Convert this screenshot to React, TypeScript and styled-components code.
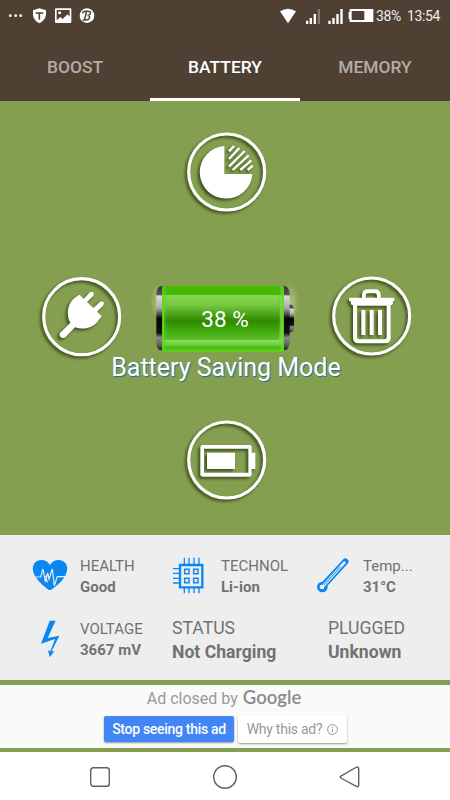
import React from 'react';
import styled, { createGlobalStyle } from 'styled-components';

const GlobalStyle = createGlobalStyle`
  * { box-sizing: border-box; }
  body { margin: 0; font-family: Roboto, "Liberation Sans", sans-serif; }
  svg { display: block; flex: none; }
`;

const Screen = styled.main`
  width: 450px;
  height: 800px;
  display: flex;
  flex-direction: column;
  background: #849f50;
  overflow: hidden;
`;

const Header = styled.header`
  height: 101px;
  background: #4e4033;
  flex: none;
`;

const StatusBar = styled.div`
  height: 32px;
  display: flex;
  justify-content: space-between;
  color: #fff;
`;

const StatusRight = styled.div`
  display: flex;
`;

const StatusText = styled.span<{ $width: number }>`
  width: ${p => p.$width}px;
  font-size: 14px;
  letter-spacing: -0.35px;
  line-height: 33px;
  white-space: nowrap;
  color: #f0eeec;
`;

const Tabs = styled.nav`
  height: 69px;
  display: grid;
  grid-template-columns: repeat(3, 150px);
`;

const Tab = styled.button<{ $active?: boolean }>`
  border: 0;
  border-bottom: 3px solid ${p => (p.$active ? '#fff' : 'transparent')};
  background: none;
  padding: 3px 0 0;
  font: 500 17.4px/20px Roboto, sans-serif;
  color: ${p => (p.$active ? '#fff' : '#b3aca6')};
`;

const Hero = styled.section`
  height: 434px;
  flex: none;
  padding-top: 19px;
  display: flex;
  flex-direction: column;
`;

const CenterRow = styled.div`
  padding-left: 175px;
`;

const MiddleRow = styled.div`
  margin-top: 40px;
  padding-left: 30px;
  display: grid;
  grid-template-columns: 105px 185px 105px;
`;

const IconDrawing = styled.svg`
  width: 105px;
  height: 105px;
  overflow: visible;
  filter: drop-shadow(-1.5px 2px 1.8px rgba(20, 30, 0, 0.65));
`;

const BatteryBox = styled.div`
  display: grid;
  > * { grid-area: 1 / 1; }
`;

const Percent = styled.span`
  padding: 0 5px 0 0;
  text-align: center;
  font-size: 22.5px;
  line-height: 108px;
  height: 105px;
  color: #fff;
  z-index: 1;
`;

const ModeTitle = styled.h1`
  height: 30px;
  margin: -17px 0 25px;
  padding-left: 2px;
  text-align: center;
  font-weight: 400;
  font-size: 25px;
  line-height: 30px;
  color: #fff;
  text-shadow: 1px 1px 1px #16709a;
  z-index: 1;
`;

const Panel = styled.section`
  height: 145px;
  flex: none;
  background: #eee;
  padding-top: 21px;
`;

const InfoRow = styled.div<{ $cols: string }>`
  display: grid;
  grid-template-columns: ${p => p.$cols};
  height: 63px;
`;

const Metric = styled.div<{ $large?: boolean }>`
  color: #727272;
  white-space: nowrap;
  font-size: ${p => (p.$large ? 17.6 : 15)}px;
  line-height: ${p => (p.$large ? 23.5 : 20.5)}px;
  margin-top: ${p => (p.$large ? -2 : 0)}px;
`;

const Label = styled.div``;

const Value = styled.div`
  font-weight: 700;
`;

const AdBar = styled.section`
  height: 63px;
  flex: none;
  margin: 5px 0 4px;
  background: #fafafa;
`;

const AdTitle = styled.div`
  height: 27px;
  display: flex;
  justify-content: center;
  align-items: baseline;
  gap: 5px;
  font-size: 16px;
  line-height: 27px;
  color: #999;
  padding-right: 2px;
`;

const Brand = styled.span`
  font-family: Lato, sans-serif;
  font-weight: 600;
  font-size: 18.5px;
  line-height: 20px;
  color: #8b8b8b;
`;

const AdActions = styled.div`
  display: flex;
  padding-left: 104px;
  gap: 4px;
`;

const AdButton = styled.button<{ $primary?: boolean }>`
  width: ${p => (p.$primary ? 130 : 109)}px;
  height: ${p => (p.$primary ? 26 : 28)}px;
  margin-top: ${p => (p.$primary ? 4 : 3)}px;
  padding: 0;
  border: 0;
  border-radius: 2px;
  display: flex;
  align-items: center;
  justify-content: center;
  gap: 5px;
  white-space: nowrap;
  font: ${p => (p.$primary ? 500 : 400)} 14px/20px Roboto, sans-serif;
  letter-spacing: ${p => (p.$primary ? -0.3 : -0.25)}px;
  color: ${p => (p.$primary ? '#fff' : '#999')};
  background: ${p => (p.$primary ? '#4285f4' : '#fff')};
  box-shadow: 0 1px 2px rgba(0, 0, 0, 0.4);
`;

const NavBar = styled.footer`
  height: 48px;
  flex: none;
  background: #fff;
  display: flex;
  justify-content: center;
  gap: 99px;
  padding-top: 1px;
  align-items: center;
`;

const RoundIcon = ({ children, cy = 156 }: { children: React.ReactNode; cy?: number }) => (
  <IconDrawing viewBox="0 0 315 315" fill="#fff">
    <circle cx="155" cy={cy} r="114" fill="none" stroke="#fff" strokeWidth="9.5" />
    {children}
  </IconDrawing>
);

const StatusLeftIcons = () => (
  <svg width="100" height="32" viewBox="0 0 300 96" fill="#fff">
    <circle cx="31" cy="47" r="4" /><circle cx="47" cy="47" r="4" /><circle cx="62" cy="47" r="4" />
    <path d="M99 31 118 25 138 31V45Q135 61 118 70Q101 61 99 45Z" />
    <path d="M107 37H130V41H120.500V57L118 60 115.500 57V41H107Z" fill="#4e4033" />
    <path d="M168 25H211Q214 25 214 28V66Q214 69 211 69H168Q165 69 165 66V28Q165 25 168 25Z" />
    <path d="M170 30H209V50L203 43 188 57 181 51 170 61Z" fill="#4e4033" />
    <circle cx="179" cy="38" r="4.500" />
    <circle cx="261" cy="47" r="22" />
    <path d="M254 34H264Q274 34 271 41Q269 46 263 46Q271 48 268 55Q265 61 256 60H248M260 33 253 61M248 40Q249 34 256 34" fill="none" stroke="#4e4033" strokeWidth="4.5" />
  </svg>
);

const StatusRightIcons = () => (
  <svg width="101" height="32" viewBox="150 0 303 96" fill="#fff">
    <path d="M165 34Q189 18 213 34L189 70Z" />
    <path d="M243 62h7v10h-7zM254 54h7v18h-7zM266 42h7v30h-7zM310 62h7v10h-7zM322 54h7v18h-7zM334 42h7v30h-7zM346 27h7v45h-7z" />
    <path d="M278 27h7v45h-7z" opacity=".3" />
    <path d="M374 27H445V66H374V58H371V36H374Z" />
    <path d="M380 33H418V60H380Z" fill="#4e4033" />
  </svg>
);

const BatteryDrawing = () => (
  <svg width="185" height="105" viewBox="105 -15 555 315">
    <defs>
      <linearGradient id="cell" x2="0" y2="1">
        <stop offset="0" stopColor="#43b900" /><stop offset=".13" stopColor="#43b900" />
        <stop offset=".14" stopColor="#86d654" /><stop offset=".28" stopColor="#77cb42" />
        <stop offset=".45" stopColor="#439d12" /><stop offset=".53" stopColor="#328700" />
        <stop offset=".65" stopColor="#3ca50a" /><stop offset=".81" stopColor="#5bbf27" />
        <stop offset=".82" stopColor="#90df62" /><stop offset=".91" stopColor="#62c92d" />
        <stop offset=".92" stopColor="#43bc02" /><stop offset="1" stopColor="#66cc30" />
      </linearGradient>
      <linearGradient id="metal" x2="0" y2="1">
        <stop offset="0" stopColor="#333" /><stop offset=".13" stopColor="#555" />
        <stop offset=".15" stopColor="#ddd" /><stop offset=".34" stopColor="#aaa" />
        <stop offset=".46" stopColor="#333" /><stop offset=".5" stopColor="#050505" />
        <stop offset=".73" stopColor="#111" /><stop offset=".8" stopColor="#888" />
        <stop offset=".9" stopColor="#666" /><stop offset="1" stopColor="#222" />
      </linearGradient>
      <linearGradient id="edge">
        <stop offset="0" stopColor="#4fe000" stopOpacity=".7" />
        <stop offset=".03" stopColor="#61d123" stopOpacity=".3" />
        <stop offset=".05" stopColor="#44b900" stopOpacity="0" />
        <stop offset=".95" stopColor="#44b900" stopOpacity="0" />
        <stop offset=".98" stopColor="#70dc37" stopOpacity=".6" />
        <stop offset="1" stopColor="#4fe000" />
      </linearGradient>
      <radialGradient id="glow">
        <stop offset="0" stopColor="#d6e7b0" stopOpacity=".5" />
        <stop offset="1" stopColor="#d6e7b0" stopOpacity="0" />
      </radialGradient>
    </defs>
    <path d="M150 39H200V150H150Z" fill="url(#glow)" />
    <path d="M540 39H600V160H540Z" fill="url(#glow)" />
    <path d="M565 104H574Q582 108 582 122V168Q582 184 574 187H565Z" fill="url(#metal)" />
    <path d="M186 49H181Q171 51 169 73V216Q170 240 182 241H190V49ZM547 49H557Q567 52 569 73V216Q567 237 557 240H547Z" fill="url(#metal)" />
    <rect x="186" y="48" width="364" height="198" rx="8" fill="url(#cell)" />
    <path d="M193 74Q190 78 190 90V205Q191 222 201 225" fill="none" stroke="#73d940" strokeWidth="4" />
    <rect x="186" y="48" width="366" height="196" rx="8" fill="url(#edge)" />
    <path d="M530 222Q539 203 540 157V76H548V222Z" fill="#8bd55e" opacity=".5" />
  </svg>
);

const blue = '#0c87f2';

const HeartIcon = () => (
  <svg width="40" height="40" viewBox="90 80 120 120">
    <path d="M150 107C140 88 113 88 103 102C90 123 106 147 127 166L145 181Q151 184 157 179L178 162C198 144 208 118 197 102C185 87 160 88 150 107Z" fill={blue} />
    <path d="M106 143H122L129 119 136 157 143 131 147 149 157 119 163 169 172 142H196M137 139 142 160" fill="none" stroke="#eee" strokeWidth="3.5" />
  </svg>
);

const ChipIcon = () => (
  <svg width="40" height="40" viewBox="510 80 120 120" fill="none" stroke={blue}>
    <path d="M540 107H607V174H540Z" strokeWidth="7" />
    <path d="M553 85V105M567 85V105M582 85V105M597 85V105M553 176V192M567 176V192M582 176V192M597 176V192M519 118H538M519 132H538M519 147H538M519 161H538" strokeWidth="4" />
    <path d="M554 120H567V133H554ZM581 120H594V133H581ZM554 147H567V160H554ZM581 147H594V160H581Z" strokeWidth="4.5" />
  </svg>
);

const ThermometerIcon = () => (
  <svg width="40" height="40" viewBox="265 80 120 120">
    <path d="M292 173 362 97" stroke={blue} strokeWidth="19" strokeLinecap="round" />
    <circle cx="293" cy="173" r="16" fill={blue} />
    <path d="M293 173 359 100" stroke="#eee" strokeWidth="8" strokeLinecap="round" />
    <circle cx="292" cy="173" r="7" fill="#eee" />
    <path d="M298 167 348 112" stroke={blue} strokeWidth="3" />
  </svg>
);

const BoltIcon = () => (
  <svg width="40" height="40" viewBox="90 267 120 120">
    <path d="M149 272H167L143 324 178 317 155 364 163 364 149 382 144 360 151 364 165 327 123 341Z" fill={blue} />
  </svg>
);

export default function App() {
  return (
    <Screen>
      <GlobalStyle />
      <Header>
        <StatusBar>
          <StatusLeftIcons />
          <StatusRight>
            <StatusRightIcons />
            <StatusText $width={31}>38%</StatusText>
            <StatusText $width={43}>13:54</StatusText>
          </StatusRight>
        </StatusBar>
        <Tabs>
          <Tab>BOOST</Tab>
          <Tab $active>BATTERY</Tab>
          <Tab>MEMORY</Tab>
        </Tabs>
      </Header>
      <Hero>
        <CenterRow>
          <RoundIcon>
            <path d="M148 78V162H232A79 79 0 1 1 148 78Z" />
            <path d="M162 94 177 78M162 117 193 84M162 140 209 93M173 150 221 106M196 150 229 121M218 150 233 137" stroke="#fff" strokeWidth="7" />
          </RoundIcon>
        </CenterRow>
        <MiddleRow>
          <RoundIcon cy={155}>
            <path d="M146 90Q150 89 153 94L161 101 180 82Q187 78 191 85Q193 89 189 93L171 111 190 129 210 111Q216 107 221 112Q223 118 219 122L201 140 214 152Q216 157 210 159C198 184 166 198 135 187L107 216Q99 222 91 216Q86 211 90 204L121 173C107 150 112 108 143 93Z" />
          </RoundIcon>
          <BatteryBox>
            <BatteryDrawing />
            <Percent>38 %</Percent>
          </BatteryBox>
          <RoundIcon cy={153}>
            <path d="M126 98V90Q126 73 143 73H164Q182 73 182 90V98H220Q223 98 223 101V108H219Q220 121 212 121V218Q212 235 195 235H116Q99 235 99 218V121Q91 121 92 108H87V101Q87 98 90 98ZM137 98H171V92Q171 85 164 85H144Q137 85 137 92ZM111 122V216Q111 223 118 223H193Q200 223 200 216V122Z" fillRule="evenodd" />
            <path d="M124 135H136V210H124ZM149 135H161V210H149ZM174 135H186V210H174Z" />
          </RoundIcon>
        </MiddleRow>
        <ModeTitle>Battery Saving Mode</ModeTitle>
        <CenterRow>
          <RoundIcon>
            <path fillRule="evenodd" d="M83 111H223Q230 111 230 118V134H241V183H230V198Q230 206 223 206H83Q76 206 76 198V118Q76 111 83 111ZM87 122V194H220V122Z" />
            <path d="M96 134H180V183H96Z" />
          </RoundIcon>
        </CenterRow>
      </Hero>
      <Panel>
        <InfoRow $cols="30px 50px 90px 51px 92px 50px 1fr">
          <span />
          <HeartIcon />
          <Metric><Label>HEALTH</Label><Value>Good</Value></Metric>
          <ChipIcon />
          <Metric><Label>TECHNOL</Label><Value>Li-ion</Value></Metric>
          <ThermometerIcon />
          <Metric><Label>Temp...</Label><Value>31°C</Value></Metric>
        </InfoRow>
        <InfoRow $cols="30px 50px 92px 156px 1fr">
          <span />
          <BoltIcon />
          <Metric><Label>VOLTAGE</Label><Value>3667 mV</Value></Metric>
          <Metric $large><Label>STATUS</Label><Value>Not Charging</Value></Metric>
          <Metric $large><Label>PLUGGED</Label><Value>Unknown</Value></Metric>
        </InfoRow>
      </Panel>
      <AdBar>
        <AdTitle>Ad closed by <Brand>Google</Brand></AdTitle>
        <AdActions>
          <AdButton $primary>Stop seeing this ad</AdButton>
          <AdButton>
            Why this ad?
            <svg width="11" height="11" viewBox="0 0 11 11" fill="none" stroke="#999">
              <circle cx="5.5" cy="5.5" r="4.9" /><path d="M5.5 4.7V8.3M5.5 2.6V3.8" />
            </svg>
          </AdButton>
        </AdActions>
      </AdBar>
      <NavBar>
        <svg width="26" height="26" viewBox="0 0 26 26" fill="none" stroke="#606060" strokeWidth="1.4">
          <rect x="3.7" y="3.7" width="18.6" height="18.6" rx="2.5" />
        </svg>
        <svg width="26" height="26" viewBox="0 0 26 26" fill="none" stroke="#606060" strokeWidth="1.4">
          <circle cx="13" cy="13" r="11.3" />
        </svg>
        <svg width="26" height="26" viewBox="0 0 26 26" fill="none" stroke="#606060" strokeWidth="1.4" strokeLinejoin="round">
          <path d="M3.9 12.2 18.8 3.5Q21.7 2 21.7 5V20.8Q21.7 23.8 18.8 22.2L3.9 14Q2.5 13 3.9 12.2Z" />
        </svg>
      </NavBar>
    </Screen>
  );
}
